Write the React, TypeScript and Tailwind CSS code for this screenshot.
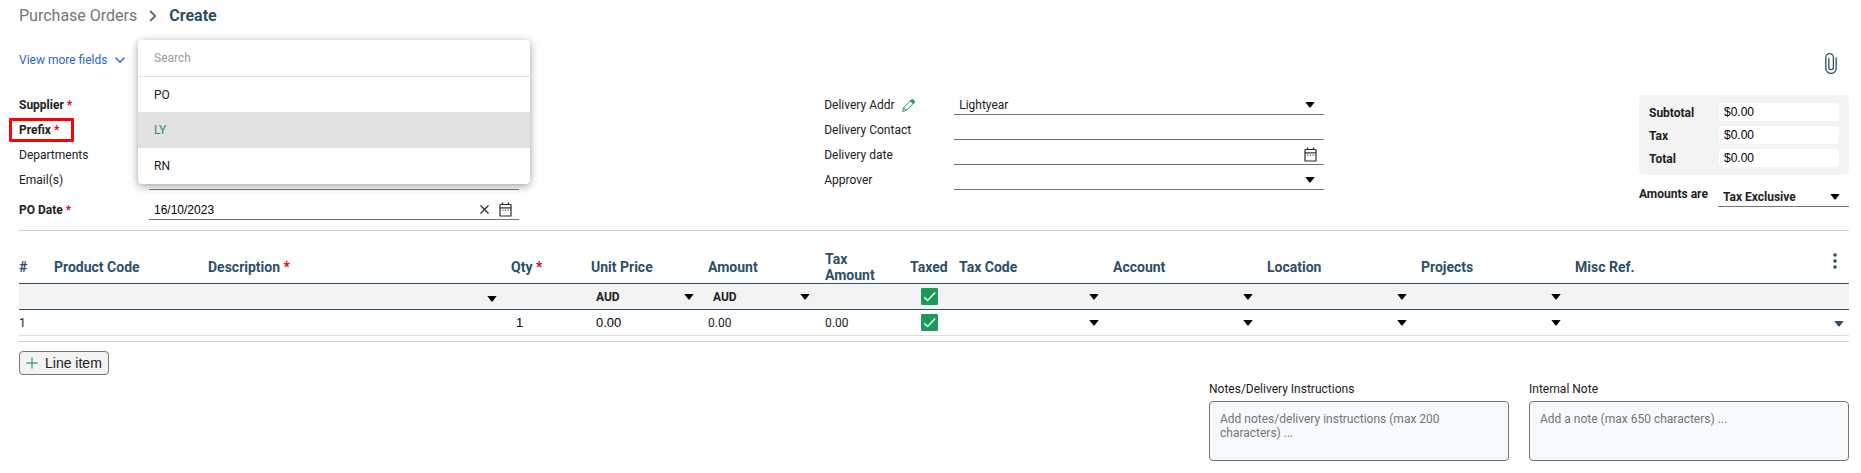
import React, { useState } from "react";

function Caret({ className = "" }: { className?: string }) {
  return (
    <svg viewBox="0 0 10 6" aria-hidden="true" className={`pointer-events-none h-[6px] w-[10px] shrink-0 fill-current ${className}`}>
      <path d="M0.3 0h9.4L5.9 5.1a1.2 1.2 0 0 1-1.8 0z" />
    </svg>
  );
}

function CalendarIcon() {
  return (
    <svg viewBox="0 0 13 15" aria-hidden="true" className="h-[15px] w-[13px] shrink-0" fill="none" stroke="#2b2b2b">
      <rect x="1" y="2.5" width="11" height="11.5" rx="0.6" strokeWidth="1.2" />
      <path d="M1 5.9h11" strokeWidth="1.2" />
      <path d="M3.5 0.5v2M9.5 0.5v2" strokeWidth="1.3" />
      <path d="M3.2 8.2h1.2M5.9 8.2h1.2M8.6 8.2h1.2" strokeWidth="1" />
    </svg>
  );
}

function Star() {
  return <span className="text-[#e3001b]"> *</span>;
}

const underline = "flex h-[25px] items-center border-b border-[#757575] pt-[5px] pl-[5px]";
const arial = "font-['Liberation_Sans',Arial,sans-serif]";

function Field({
  id,
  label,
  required,
  bold,
  extra,
  children,
  className = "",
}: {
  id: string;
  label: string;
  required?: boolean;
  bold?: boolean;
  extra?: React.ReactNode;
  children: React.ReactNode;
  className?: string;
}) {
  return (
    <div className={`flex h-[25px] items-center ${className}`}>
      <div className="flex w-[130px] shrink-0 items-center gap-[7px] pt-[5px]">
        <label htmlFor={id} className={bold ? "font-bold" : ""}>
          {label}
          {required && <Star />}
        </label>
        {extra}
      </div>
      <div className="relative min-w-0 flex-1">{children}</div>
    </div>
  );
}

function SelectBox({ id, options }: { id: string; options: string[] }) {
  return (
    <div className={`${underline} pr-[9px]`}>
      <select id={id} className="-mr-[10px] h-full min-w-0 flex-1 appearance-none bg-transparent outline-none">
        {options.map((o) => (
          <option key={o}>{o}</option>
        ))}
      </select>
      <Caret className="text-black" />
    </div>
  );
}

function Check({ label }: { label: string }) {
  const [on, setOn] = useState(true);
  return (
    <span className="grid h-[17px] w-[17px] place-items-center">
      <input
        type="checkbox"
        aria-label={label}
        checked={on}
        onChange={() => setOn(!on)}
        className="col-start-1 row-start-1 h-[17px] w-[17px] appearance-none rounded-[1px] border border-[#1d9a5b] checked:bg-[#1d9a5b]"
      />
      <svg viewBox="0 0 17 17" aria-hidden="true" className="pointer-events-none col-start-1 row-start-1 h-[17px] w-[17px]" fill="none" stroke="#fff" strokeWidth="1.4">
        <path d="M3.2 9.2l3.4 3.4 7.6-8" />
      </svg>
    </span>
  );
}

function CellSelect({ label, value = "", className = "" }: { label: string; value?: string; className?: string }) {
  return (
    <div className={`flex h-[25px] items-center pl-[5px] ${className}`}>
      <select aria-label={label} defaultValue={value} className="-mr-[10px] h-full min-w-0 flex-1 appearance-none bg-transparent font-bold outline-none">
        <option>{value}</option>
      </select>
      <Caret className="text-black" />
    </div>
  );
}

const lookups = ["Tax Code", "Account", "Location", "Projects"];

function LineTable() {
  return (
    <table className="w-full table-fixed border-collapse text-left">
      <colgroup>
        <col className="w-[35px]" />
        <col className="w-[154px]" />
        <col className="w-[303px]" />
        <col className="w-[80px]" />
        <col className="w-[117px]" />
        <col className="w-[117px]" />
        <col className="w-[85px]" />
        <col className="w-[49px]" />
        <col className="w-[154px]" />
        <col className="w-[154px]" />
        <col className="w-[154px]" />
        <col className="w-[154px]" />
        <col />
        <col className="w-[24px]" />
      </colgroup>
      <thead className="text-[14px] leading-4 text-[#2c4f66]">
        <tr className="h-[34px] border-b border-[#2c4f66] [&>th]:pt-[2px]">
          <th>#</th>
          <th>Product Code</th>
          <th>Description<Star /></th>
          <th>Qty<Star /></th>
          <th>Unit Price</th>
          <th>Amount</th>
          <th className="pr-6">Tax Amount</th>
          <th>Taxed</th>
          <th>Tax Code</th>
          <th>Account</th>
          <th>Location</th>
          <th>Projects</th>
          <th>Misc Ref.</th>
          <th className="align-top">
            <button type="button" aria-label="Table options" className="ml-2 block pt-[2px]">
              <svg viewBox="0 0 4 16" aria-hidden="true" className="h-[16px] w-[4px] fill-[#2c4f66]">
                <circle cx="2" cy="2" r="1.8" />
                <circle cx="2" cy="8" r="1.8" />
                <circle cx="2" cy="14" r="1.8" />
              </svg>
            </button>
          </th>
        </tr>
      </thead>
      <tbody>
        <tr className="h-[26px] border-b border-[#2c4f66] bg-[#f3f3f3]">
          <td />
          <td />
          <td><CellSelect label="Product for all lines" className="pt-1 pr-[14px]" /></td>
          <td />
          <td><CellSelect label="Unit price currency" value="AUD" className="pr-[14px]" /></td>
          <td><CellSelect label="Amount currency" value="AUD" className="pr-[15px]" /></td>
          <td />
          <td className="pl-[11px]"><Check label="Tax all lines" /></td>
          {lookups.map((l) => (
            <td key={l}><CellSelect label={`${l} for all lines`} className="pr-[14px]" /></td>
          ))}
          <td />
          <td />
        </tr>
        <tr className="h-[26px] border-b border-[#dedede]">
          <td>1</td>
          <td />
          <td />
          <td><input aria-label="Quantity" defaultValue="1" className={`block w-full bg-transparent pl-[5px] text-[13px] text-black outline-none ${arial}`} /></td>
          <td><input aria-label="Unit price" defaultValue="0.00" className={`block w-full bg-transparent pl-[5px] text-[13px] text-black outline-none ${arial}`} /></td>
          <td>0.00</td>
          <td>0.00</td>
          <td className="pl-[11px]"><Check label="Taxed, line 1" /></td>
          {lookups.map((l) => (
            <td key={l}><CellSelect label={`${l}, line 1`} className="pr-[14px]" /></td>
          ))}
          <td />
          <td>
            <button type="button" aria-label="Line 1 actions" className="ml-[9px] block pt-[2px] text-[#2c4f66]">
              <Caret />
            </button>
          </td>
        </tr>
      </tbody>
    </table>
  );
}

function PrefixMenu() {
  return (
    <div className="absolute -top-[75px] -left-[11px] z-10 w-[392px] overflow-hidden rounded-[4px] bg-white shadow-[0_2px_8px_rgba(0,0,0,0.38)]">
      <input
        aria-label="Search prefixes"
        placeholder="Search"
        className="block h-[37px] w-full border-b border-[#dedede] px-4 outline-none placeholder:text-[#9b9b9b]"
      />
      <ul role="listbox" aria-label="Prefix">
        <li role="option" aria-selected={false} className="flex h-[35px] items-center px-4">PO</li>
        <li role="option" aria-selected={true} className="flex h-[36px] items-center bg-[#e2e2e2] px-4 text-[#1d9a5b]">LY</li>
        <li role="option" aria-selected={false} className="flex h-[36px] items-center px-4">RN</li>
      </ul>
    </div>
  );
}

export default function App() {
  return (
    <main className="bg-white pr-3 pl-[19px] font-[Roboto,sans-serif] text-[12px] leading-[14px] text-[#212121]">
      <nav aria-label="Breadcrumb" className="flex h-8 items-center text-[16px] leading-5">
        <a href="#orders" className="text-[#757575]">Purchase Orders</a>
        <svg viewBox="0 0 8 12" aria-hidden="true" className="mx-3 h-[12px] w-[8px]" fill="none" stroke="#666" strokeWidth="1.8">
          <path d="M1.2 1l5 5-5 5" />
        </svg>
        <span aria-current="page" className="font-bold text-[#2c4f66]">Create</span>
      </nav>

      <div className="flex h-[58px] items-center justify-between">
        <button type="button" className="flex items-center gap-2 pb-[2px] text-[#2766cf]">
          View more fields
          <svg viewBox="0 0 10 6" aria-hidden="true" className="h-[6px] w-[10px]" fill="none" stroke="currentColor" strokeWidth="1.4">
            <path d="M0.6 0.7L5 5l4.4-4.3" />
          </svg>
        </button>
        <button type="button" aria-label="Attach a file" className="mr-3 pt-1">
          <svg viewBox="0 0 12 21" aria-hidden="true" className="h-[21px] w-[12px]" fill="none" stroke="#2c4f66" strokeWidth="1.3" strokeLinecap="round">
            <path d="M11.2 5v10.2a5.2 5.2 0 0 1-10.4 0V4.5a3.8 3.8 0 0 1 7.6 0v9.8a2.3 2.3 0 0 1-4.6 0V5.5" />
          </svg>
        </button>
      </div>

      <form className="grid grid-cols-[44%_1fr_210px] border-b border-[#c3cfd5] pb-[10px]">
        <div className="max-w-[500px]">
          <Field id="supplier" label="Supplier" required bold><SelectBox id="supplier" options={[""]} /></Field>
          <div className="relative">
            <Field id="prefix" label="Prefix" required bold>
              <SelectBox id="prefix" options={["LY"]} />
              <PrefixMenu />
            </Field>
            <span aria-hidden="true" className="pointer-events-none absolute top-[3px] -left-[10px] h-[24px] w-[65px] rounded-[1px] border-[3px] border-[#ff0000]" />
          </div>
          <Field id="departments" label="Departments"><SelectBox id="departments" options={[""]} /></Field>
          <Field id="emails" label="Email(s)">
            <div className={underline}><input id="emails" className="w-full outline-none" /></div>
          </Field>
          <Field id="po-date" label="PO Date" required bold className="mt-[5px]">
            <div className={`${underline} gap-[10px] pr-[7px]`}>
              <input id="po-date" defaultValue="16/10/2023" className={`min-w-0 flex-1 text-black outline-none ${arial}`} />
              <button type="button" aria-label="Clear date">
                <svg viewBox="0 0 9 9" aria-hidden="true" className="h-[9px] w-[9px]" stroke="#2b2b2b" strokeWidth="1.2">
                  <path d="M0.5 0.5l8 8M8.5 0.5l-8 8" />
                </svg>
              </button>
              <button type="button" aria-label="Pick PO date"><CalendarIcon /></button>
            </div>
          </Field>
        </div>

        <div className="max-w-[500px]">
          <Field
            id="addr"
            label="Delivery Addr"
            extra={
              <button type="button" aria-label="Edit delivery address">
                <svg viewBox="0 0 13 13" aria-hidden="true" className="h-[13px] w-[13px]" fill="none" stroke="#1d9a5b" strokeWidth="1">
                  <path d="M1.6 8.7L9.2 1.1M4.3 11.4l7.6-7.6M1.6 8.7L0.7 12.3l3.6-0.9M1.6 8.7l2.7 2.7" />
                  <path d="M8.4 1.9l1-1a1.3 1.3 0 0 1 1.8 0l0.9 0.9a1.3 1.3 0 0 1 0 1.8l-1 1z" fill="#1d9a5b" />
                </svg>
              </button>
            }
          >
            <SelectBox id="addr" options={["Lightyear"]} />
          </Field>
          <Field id="contact" label="Delivery Contact">
            <div className={underline}><input id="contact" className="w-full outline-none" /></div>
          </Field>
          <Field id="delivery-date" label="Delivery date">
            <div className={`${underline} pr-[7px]`}>
              <input id="delivery-date" className="min-w-0 flex-1 outline-none" />
              <button type="button" aria-label="Pick delivery date"><CalendarIcon /></button>
            </div>
          </Field>
          <Field id="approver" label="Approver"><SelectBox id="approver" options={[""]} /></Field>
        </div>

        <div className="pt-[5px]">
          <div className="flex flex-col gap-[5px] rounded-[5px] bg-[#f3f3f3] px-[10px] py-2">
            {["Subtotal", "Tax", "Total"].map((t) => (
              <div key={t} className="flex items-center">
                <label htmlFor={t} className="w-[70px] pt-px font-bold">{t}</label>
                <input id={t} readOnly defaultValue="$0.00" className={`h-[18px] min-w-0 flex-1 rounded-[4px] bg-white px-[5px] text-black outline-none ${arial}`} />
              </div>
            ))}
          </div>
          <div className="flex pt-[10px] font-bold">
            <label htmlFor="amounts" className="w-[79px] pt-[2px]">Amounts are</label>
            <div className="flex h-[22px] min-w-0 flex-1 items-center border-b border-[#757575] pt-[3px] pr-[9px] pl-[5px]">
              <select id="amounts" className="-mr-[10px] min-w-0 flex-1 appearance-none bg-transparent outline-none">
                <option>Tax Exclusive</option>
              </select>
              <Caret className="text-black" />
            </div>
          </div>
        </div>
      </form>

      <section aria-label="Line items" className="border-b border-[#c3cfd5] pt-[18px] pb-[5px]">
        <LineTable />
      </section>

      <button type="button" className={`mt-[9px] flex h-[24px] items-center gap-[7px] rounded-[4px] border border-[#757575] bg-[#f3f3f3] px-[6px] text-[14px] ${arial}`}>
        <svg viewBox="0 0 12 12" aria-hidden="true" className="h-[12px] w-[12px]" stroke="#3fae74" strokeWidth="1.4">
          <path d="M6 0.5v11M0.5 6h11" />
        </svg>
        Line item
      </button>

      <div className="mt-[7px] flex justify-end gap-5">
        <div className="w-[300px]">
          <label htmlFor="notes" className="mb-[5px] block">Notes/Delivery Instructions</label>
          <textarea id="notes" placeholder="Add notes/delivery instructions (max 200 characters) ..." className="block h-[60px] w-full resize-none rounded-[4px] border border-[#757575] bg-[#f6fafd] px-[10px] py-[10px] outline-none placeholder:text-[#757575]" />
        </div>
        <div className="w-[320px]">
          <label htmlFor="internal" className="mb-[5px] block">Internal Note</label>
          <textarea id="internal" placeholder="Add a note (max 650 characters) ..." className="block h-[60px] w-full resize-none rounded-[4px] border border-[#757575] bg-[#f6fafd] px-[10px] py-[10px] outline-none placeholder:text-[#757575]" />
        </div>
      </div>
    </main>
  );
}
